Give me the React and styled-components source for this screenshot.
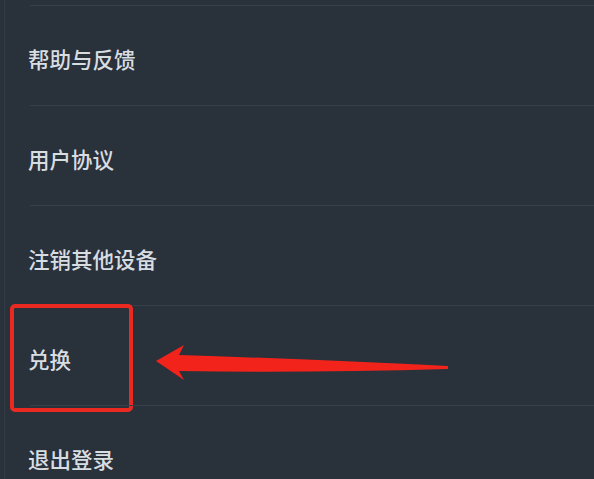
import React from 'react';
import styled, { createGlobalStyle } from 'styled-components';

const GlobalStyle = createGlobalStyle`
  html, body {
    margin: 0;
    padding: 0;
    background-color: #29313b;
    overflow: hidden;
  }
  body {
    font-family: "Noto Sans CJK SC", "Noto Sans", sans-serif;
  }
`;

const items = ['帮助与反馈', '用户协议', '注销其他设备', '兑换', '退出登录'];

const App = () => {
  return (
    <St.Page>
      <GlobalStyle />
      <St.Panel>
        <St.List>
          {items.map((label) => (
            <St.Row key={label}>
              <St.Label>{label}</St.Label>
              {label === '兑换' && <St.Highlight />}
            </St.Row>
          ))}
        </St.List>
        <St.Arrow viewBox="0 0 300 40" aria-hidden="true">
          <path d="M0 24 L28 8 L23 18 Q150 22 292 29 L292 32 Q150 36 23 34 L28 43 Z" fill="#f2231b" />
        </St.Arrow>
      </St.Panel>
    </St.Page>
  );
};

export default App;

const St = {
  Page: styled.div`
    width: 594px;
    height: 479px;
    background-color: #29313b;
    overflow: hidden;
  `,

  Panel: styled.div`
    position: relative;
    height: 100%;
    margin-left: 4px;
    border-left: 1px solid #333c46;
  `,

  List: styled.ul`
    list-style: none;
    margin: 0;
    padding: 5px 0 0 25px;
  `,

  Row: styled.li`
    position: relative;
    box-sizing: border-box;
    height: 100px;
    display: flex;
    align-items: center;
    padding-top: 6px;
    border-top: 1px solid #353e49;
  `,

  Label: styled.span`
    margin-left: -2px;
    font-size: 21.5px;
    font-weight: 500;
    line-height: 1;
    color: #d8dde2;
  `,

  Highlight: styled.div`
    position: absolute;
    left: -20px;
    top: -2px;
    box-sizing: border-box;
    width: 123px;
    height: 108px;
    border: 4px solid #ea2a20;
    border-radius: 5px;
  `,

  Arrow: styled.svg`
    position: absolute;
    left: 151px;
    top: 337px;
    width: 300px;
    height: 40px;
    overflow: visible;
  `
};
